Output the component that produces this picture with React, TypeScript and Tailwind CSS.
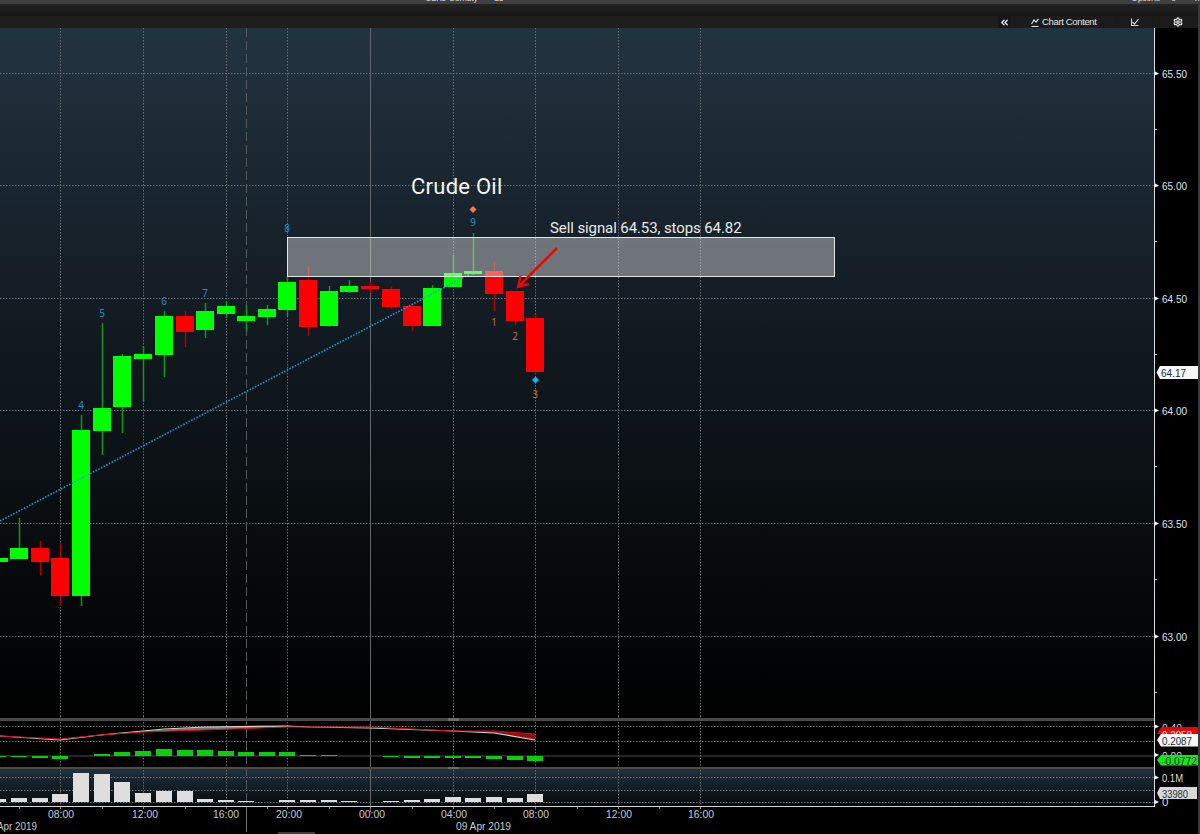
import { ChevronsLeft, Settings } from 'lucide-react'

type Candle = [number, number, number, number, number, 'g' | 'r']

// x, body top, body bottom, wick top, wick bottom
const candles: Candle[] = [
  [-1, 558, 562, 558, 562, 'g'],
  [19, 548, 559, 518, 559, 'g'],
  [40, 548, 562, 541, 575, 'r'],
  [60, 558, 596, 543, 606, 'r'],
  [81, 430, 596, 415, 606, 'g'],
  [102, 408, 431, 323, 455, 'g'],
  [122, 356, 407, 354, 433, 'g'],
  [143, 354, 359, 346, 402, 'g'],
  [164, 316, 355, 311, 377, 'g'],
  [185, 316, 332, 311, 347, 'r'],
  [205, 311, 330, 303, 338, 'g'],
  [226, 306, 314, 302, 318, 'g'],
  [246, 316, 321, 305, 332, 'g'],
  [267, 309, 317, 305, 325, 'g'],
  [287, 282, 310, 277, 316, 'g'],
  [308, 280, 327, 266, 336, 'r'],
  [329, 291, 326, 286, 327, 'g'],
  [349, 286, 292, 280, 293, 'g'],
  [370, 286, 289, 282, 293, 'r'],
  [391, 289, 307, 286, 309, 'r'],
  [412, 306, 326, 303, 331, 'r'],
  [432, 288, 326, 285, 326, 'g'],
  [453, 273, 287, 255, 287, 'g'],
  [473, 271, 274, 233, 275, 'g'],
  [494, 271, 294, 262, 311, 'r'],
  [515, 291, 321, 291, 325, 'r'],
  [535, 318, 372, 314, 374, 'r'],
]

const priceLines = [
  { y: 73, label: '65.50' },
  { y: 185, label: '65.00' },
  { y: 298, label: '64.50' },
  { y: 410, label: '64.00' },
  { y: 523, label: '63.50' },
  { y: 636, label: '63.00' },
]

const minorTicks = [129, 241, 354, 466, 579, 692]

const dotted = [60, 143, 226, 287, 453, 535, 618, 700]

const seqBlue = [
  { x: 287, y: 232, t: '8' },
  { x: 81, y: 409, t: '4' },
  { x: 102, y: 317, t: '5' },
  { x: 164, y: 305, t: '6' },
  { x: 205, y: 297, t: '7' },
  { x: 473, y: 226, t: '9' },
]

const seqOrange = [
  { x: 494, y: 326, t: '1' },
  { x: 515, y: 340, t: '2' },
  { x: 535, y: 398, t: '3' },
]

// x, top, bottom
const macd = [
  [-2, 756, 757], [19, 756, 757], [40, 756, 758], [60, 756, 759], [102, 754, 756], [122, 752, 756],
  [143, 751, 756], [164, 749, 756], [185, 750, 756], [205, 750, 756], [226, 751, 756], [246, 752, 756],
  [267, 752, 756], [287, 752, 756], [308, 755, 756], [329, 755, 756], [391, 756, 757], [412, 756, 758],
  [432, 756, 758], [453, 756, 758], [473, 756, 758], [494, 756, 759], [515, 756, 760], [535, 756, 761],
]

const volume = [
  [-2, 799], [19, 798], [40, 798], [60, 794], [81, 773], [102, 774], [122, 782], [143, 793], [164, 791],
  [185, 791], [205, 799], [226, 800], [246, 801], [267, 802], [287, 800], [308, 800], [329, 800], [349, 801],
  [370, 802], [391, 801], [412, 800], [432, 799], [453, 797], [473, 798], [494, 797], [515, 798], [535, 794],
]

const times = [
  { x: 61, t: '08:00' },
  { x: 145, t: '12:00' },
  { x: 226, t: '16:00' },
  { x: 289, t: '20:00' },
  { x: 372, t: '00:00' },
  { x: 454, t: '04:00' },
  { x: 536, t: '08:00' },
  { x: 619, t: '12:00' },
  { x: 701, t: '16:00' },
]

const ticks = [19, 60, 102, 143, 185, 226, 267, 287, 329, 370, 412, 453, 494, 535, 577, 618, 659, 700]

function VerticalGrid({ y1, y2 }: { y1: number; y2: number }) {
  return (
    <g>
      {dotted.map((x) => (
        <line key={x} x1={x + 0.5} x2={x + 0.5} y1={y1} y2={y2} stroke="#666b6e" strokeDasharray="1.5 1.5" />
      ))}
      <line x1={246.5} x2={246.5} y1={y1} y2={y2} stroke="#55595c" strokeDasharray="9 4" />
      <line x1={370.5} x2={370.5} y1={y1} y2={y2} stroke="#63676a" />
    </g>
  )
}

function PriceChart() {
  return (
    <div className="relative h-[688px] flex-1 bg-[linear-gradient(180deg,#223340_0%,#141d25_38%,#090e11_70%,#000_100%)]">
      <svg viewBox="0 28 1154 688" className="block h-full w-full">
        <VerticalGrid y1={28} y2={716} />
        {priceLines.map((p) => (
          <line key={p.y} x1={0} x2={1154} y1={p.y + 0.5} y2={p.y + 0.5} stroke="#666e72" strokeDasharray="1.5 1.5" />
        ))}
        {candles.map(([x, top, bottom, wt, wb, c]) => (
          <g key={x}>
            <line x1={x + 0.5} x2={x + 0.5} y1={wt} y2={wb} stroke={c === 'g' ? '#0e9a18' : '#b00000'} strokeWidth={1.5} />
            <rect x={x - 9} y={top} width={18} height={bottom - top} fill={c === 'g' ? '#00ff00' : '#ff0000'} />
          </g>
        ))}
        <line x1={0} y1={521} x2={470} y2={274} stroke="#12a0e0" strokeWidth={1.6} strokeDasharray="1.5 1.5" />
        <rect x={287.5} y={237.5} width={547} height={39} fill="#ffffff" fillOpacity={0.38} stroke="#e4e6e6" />
        <path d="M473 206 L476.5 209.5 L473 213 L469.5 209.5 Z" fill="#f0794a" />
        <path d="M535.5 376.5 L539 380 L535.5 383.5 L532 380 Z" fill="#12b4f0" />
        <g className="font-['Noto_Sans',sans-serif]" fontSize={10} textAnchor="middle">
          {seqBlue.map((s) => (
            <text key={s.t} x={s.x} y={s.y} fill="#1a90cc">{s.t}</text>
          ))}
          {seqOrange.map((s) => (
            <text key={s.t} x={s.x} y={s.y} fill="#c86c42">{s.t}</text>
          ))}
        </g>
        <path d="M557 248 L520 285" stroke="#ff0000" strokeWidth={2.6} fill="none" />
        <path d="M520.5 276 L518 287 L529 284" stroke="#ff0000" strokeWidth={2.2} fill="none" />
      </svg>
      <div className="absolute left-[411px] top-[145px] font-['Roboto',sans-serif] text-[22px] leading-7 tracking-[0.25px] text-[#f4f6f6]">Crude Oil</div>
      <div className="absolute left-[550px] top-[190px] font-['Roboto',sans-serif] text-[15px] leading-5 tracking-[-0.1px] text-[#e8eaea]">Sell signal 64.53, stops 64.82</div>
    </div>
  )
}

function PriceAxis() {
  return (
    <svg viewBox="1155 28 43 688" className="block h-[688px] w-[43px]">
      {minorTicks.map((y) => (
        <line key={y} x1={1155} x2={1157} y1={y + 0.5} y2={y + 0.5} stroke="#d8dcde" />
      ))}
      {priceLines.map((p) => (
        <g key={p.y}>
          <path d={`M1155 ${p.y - 1.5} L1159 ${p.y + 0.5} L1155 ${p.y + 2.5} Z`} fill="#fff" />
          <text x={1162} y={p.y + 5} fill="#dfe4e8" fontSize={11.5} textLength={25} lengthAdjust="spacingAndGlyphs">{p.label}</text>
        </g>
      ))}
      <path d="M1160 366 H1198 V379 H1160 L1156.5 372.5 Z" fill="#f6f6f6" />
      <text x={1161} y={377} fill="#1a2a36" fontSize={11.5} textLength={25} lengthAdjust="spacingAndGlyphs">64.17</text>
    </svg>
  )
}

function MacdPane() {
  const white = '0,736 60,740 100,735 143,731 164,729 205,727 287,726 310,727 370,728 453,731 494,733 535,740'
  const red = '0,736 60,739 100,735 143,732 205,730 287,727 370,727 453,731 494,731 535,734'
  return (
    <div className="flex h-[51px]">
      <div className="flex-1">
        <svg viewBox="0 716 1154 51" className="block h-full w-full">
          <VerticalGrid y1={716} y2={767} />
          <line x1={0} x2={1154} y1={726.5} y2={726.5} stroke="#666" strokeDasharray="1.5 1.5" />
          <line x1={0} x2={1154} y1={741.5} y2={741.5} stroke="#666" strokeDasharray="1.5 1.5" />
          <rect x={0} y={718} width={1154} height={3} fill="#4a4a4a" />
          <rect x={448} y={718} width={11} height={3} fill="#6b6b6b" />
          <polygon points="60,739.5 100,735 143,731 205,727 287,726 287,727 205,730 143,732 100,735.5" fill="#767676" />
          <polygon points="453,731 494,731 535,734 535,740 494,733" fill="#8e0f10" />
          <polyline points={white} fill="none" stroke="#d4d4d4" strokeWidth={1.2} />
          <polyline points={red} fill="none" stroke="#d80d10" strokeWidth={1} />
          <line x1={0} x2={1154} y1={756} y2={756} stroke="#4d4d4d" />
          {macd.map(([x, top, bottom]) => (
            <rect key={x} x={x - 8} y={top} width={16} height={bottom - top} fill="#08d008" />
          ))}
        </svg>
      </div>
      <div className="border-l border-[#d8dcde]">
        <svg viewBox="1155 716 43 51" className="block h-full w-[43px]">
          <g fontSize={11.5}>
            <path d="M1155 724.5 L1159 726.5 L1155 728.5 Z" fill="#fff" />
            <text x={1162} y={732} fill="#dddddd" textLength={20} lengthAdjust="spacingAndGlyphs">0.40</text>
            <path d="M1161 727 H1198 V734 H1157 Z" fill="#f00000" />
            <text x={1162} y={739} fill="#fff" textLength={30} lengthAdjust="spacingAndGlyphs">0.2058</text>
            <path d="M1161 734 H1198 V746.5 H1161 L1157 740 Z" fill="#f6f6f6" />
            <text x={1162} y={745} fill="#1a2a36" textLength={30} lengthAdjust="spacingAndGlyphs">0.2087</text>
            <path d="M1155 753 L1159 755 L1155 757 Z" fill="#fff" />
            <text x={1162} y={760} fill="#dddddd" textLength={20} lengthAdjust="spacingAndGlyphs">0.00</text>
            <path d="M1161 755 H1198 V765.5 H1161 L1157 760 Z" fill="#19e619" />
            <text x={1162} y={765} fill="#0a2a0a" textLength={35} lengthAdjust="spacingAndGlyphs">-0.0772</text>
          </g>
        </svg>
      </div>
    </div>
  )
}

function VolumePane() {
  return (
    <div className="flex h-[40px]">
      <div className="flex-1 border-b border-[#d0d4d6] bg-[linear-gradient(180deg,#223340_0%,#101a20_60%,#060a0c_100%)]">
        <svg viewBox="0 767 1154 39" className="block h-full w-full">
          <VerticalGrid y1={767} y2={806} />
          {[777, 790, 802].map((y) => (
            <line key={y} x1={0} x2={1154} y1={y + 0.5} y2={y + 0.5} stroke="#6a7276" strokeDasharray="1.5 1.5" />
          ))}
          {volume.map(([x, top]) => (
            <rect key={x} x={x - 8} y={top} width={16} height={802 - top} fill="#dedede" />
          ))}
          <rect x={0} y={767} width={1154} height={2} fill="#4a4a4a" />
          <rect x={448} y={767} width={11} height={2} fill="#6b6b6b" />
        </svg>
      </div>
      <div className="border-l border-[#d8dcde]">
        <svg viewBox="1155 767 43 40" className="block h-full w-[43px]">
          <g fontSize={11.5}>
            <path d="M1155 775.5 L1159 777.5 L1155 779.5 Z" fill="#fff" />
            <text x={1162} y={782} fill="#dddddd" textLength={21} lengthAdjust="spacingAndGlyphs">0.1M</text>
            <path d="M1155 800 L1159 802 L1155 804 Z" fill="#fff" />
            <text x={1162} y={806} fill="#dddddd" textLength={5}>0</text>
            <path d="M1160 787 H1197 V799 H1160 L1157 793 Z" fill="#d8d8d8" />
            <text x={1162} y={798} fill="#25323a" textLength={26} lengthAdjust="spacingAndGlyphs">33980</text>
          </g>
        </svg>
      </div>
    </div>
  )
}

function TimeAxis() {
  return (
    <svg viewBox="0 807 1198 27" className="block h-[27px] w-[1198px]">
      {ticks.map((x) => (
        <line key={x} x1={x + 0.5} x2={x + 0.5} y1={807} y2={809} stroke="#8a8a8a" />
      ))}
      <line x1={246.5} x2={246.5} y1={807} y2={832} stroke="#707070" />
      <line x1={370.5} x2={370.5} y1={807} y2={812} stroke="#707070" />
      <rect x={278} y={832} width={37} height={2} fill="#3e3e3e" />
      <g fontSize={11.5} fill="#c4ccd2" textAnchor="middle">
        {times.map((t) => (
          <text key={t.x} x={t.x} y={818} textLength={26} lengthAdjust="spacingAndGlyphs">{t.t}</text>
        ))}
        <text x={483.5} y={830} textLength={55} lengthAdjust="spacingAndGlyphs">09 Apr 2019</text>
        <text x={17} y={830} textLength={40} lengthAdjust="spacingAndGlyphs">Apr 2019</text>
      </g>
    </svg>
  )
}

export default function App() {
  return (
    <div className="flex h-[834px] w-[1200px] flex-col overflow-hidden bg-black font-['Liberation_Sans',sans-serif]">
      {/* title bar, cut off at the top of the shot */}
      <div className="flex h-[4px] overflow-hidden bg-[#3f3f3f] text-[9px] leading-none tracking-[-0.3px] whitespace-nowrap text-[#d0d0d0]">
        <div className="ml-[418px] mt-[-6px] w-[7px]">▪</div>
        <div className="mt-[-6px] w-[69px]">CLK9 Comdty</div>
        <div className="mt-[-6px] w-[637px]">15</div>
        <div className="mt-[-6px] w-[40px]">Options</div>
        <div className="mt-[-6px] w-[24px]">8</div>
        <div className="mt-[-6px]">x</div>
      </div>
      <div className="flex flex-1 flex-col border-r-2 border-[#3a3a3a]">
        <div className="h-[12px] bg-[linear-gradient(180deg,#222_0%,#181818_100%)]" />
        <div className="flex h-[12px] justify-end bg-[#201e1a] text-[9.5px] leading-[12px] tracking-[-0.35px] text-[#e4e4e4]">
          <div className="flex w-[13px] items-center justify-center bg-[#161616]">
            <ChevronsLeft size={11} strokeWidth={3} />
          </div>
          <div className="ml-[1px] flex w-[101px] items-center gap-[3px] bg-[#1b1b1b] pl-[19px]">
            <svg width="8" height="9" viewBox="0 0 8 9" fill="none" stroke="#d8d8d8" strokeWidth="1.2">
              <path d="M0.5 6 L3 2 L5 4 L7.5 1" />
              <path d="M0.5 8.5 H7.5" />
            </svg>
            Chart Content
          </div>
          <div className="ml-[1px] flex w-[42px] items-center justify-center bg-[#1b1b1b]">
            <svg width="8" height="8" viewBox="0 0 8 8" fill="none" stroke="#d8d8d8" strokeWidth="1.2">
              <path d="M0.5 0.5 V7.5 H7.5" />
              <path d="M1.5 4 L3.5 6 L7.5 1" />
            </svg>
          </div>
          <div className="ml-[1px] flex w-[41px] items-center justify-center bg-[#1b1b1b]">
            <Settings size={10} strokeWidth={3} />
          </div>
        </div>
        <div className="flex">
          <PriceChart />
          <div className="border-l border-[#d8dcde]">
            <PriceAxis />
          </div>
        </div>
        <MacdPane />
        <VolumePane />
        <TimeAxis />
      </div>
    </div>
  )
}
